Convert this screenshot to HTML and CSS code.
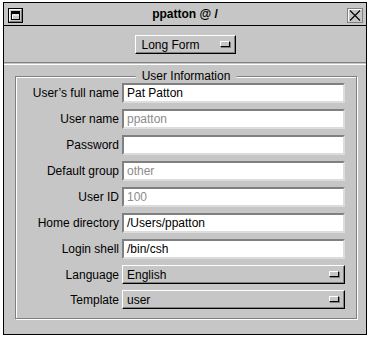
FILE: index.html
```html
<!DOCTYPE html>
<html lang="en">

<head>
    <meta charset="UTF-8">
    <title>ppatton @ /</title>
    <link rel="stylesheet" href="styles.css">
</head>

<body>
    <div class="window">
        <div class="titlebar">
            <span class="title-btn">
                <svg width="15" height="15" viewBox="0 0 15 15">
                    <rect x="0.5" y="0.5" width="14" height="14" fill="#c6c6c6" stroke="#000"/>
                    <path d="M1.5 13.5V1.5H13.5" fill="none" stroke="#fff"/>
                    <path d="M13.5 1.5V13.5H1.5" fill="none" stroke="#808080"/>
                    <rect x="3.5" y="3.5" width="8" height="8" fill="#c6c6c6" stroke="#000"/>
                    <rect x="4" y="4" width="7" height="2" fill="#000"/>
                    <path d="M4.5 11V7H11" fill="none" stroke="#fff"/>
                </svg>
            </span>
            <h1>ppatton @ /</h1>
            <span class="title-btn">
                <svg width="16" height="15" viewBox="0 0 16 15">
                    <rect x="0.5" y="0.5" width="15" height="14" fill="#c6c6c6" stroke="#808080"/>
                    <path d="M1.5 13.5V1.5H14.5" fill="none" stroke="#fff"/>
                    <path d="M3 2.5L13 12.5M13 2.5L3 12.5" stroke="#000" stroke-width="1.1"/>
                </svg>
            </span>
        </div>

        <div class="content">
            <div class="top">
                <div class="popup form-popup">
                    <span>Long Form</span>
                    <i class="knob"></i>
                </div>
            </div>

            <div class="separator"></div>

            <div class="group">
                <span class="legend">User Information</span>

                <div class="rows">
                    <label>User’s full name</label>
                    <div class="field">Pat Patton</div>

                    <label>User name</label>
                    <div class="field disabled">ppatton</div>

                    <label>Password</label>
                    <div class="field"></div>

                    <label>Default group</label>
                    <div class="field disabled">other</div>

                    <label>User ID</label>
                    <div class="field disabled">100</div>

                    <label>Home directory</label>
                    <div class="field">/Users/ppatton</div>

                    <label>Login shell</label>
                    <div class="field">/bin/csh</div>

                    <label>Language</label>
                    <div class="popup">
                        <span>English</span>
                        <i class="knob"></i>
                    </div>

                    <label>Template</label>
                    <div class="popup">
                        <span>user</span>
                        <i class="knob"></i>
                    </div>
                </div>
            </div>
        </div>
    </div>
</body>

</html>
```

FILE: styles.css
```css
:root {
    --gray: #c6c6c6;
    --dark: #808080;
    --light: #fff;
    --black: #000;
    --dim: #8c8c8c;
}

body {
    margin: 0;
    padding: 0;
    background-color: var(--light);
    font-family: "Liberation Sans", Arial, sans-serif;
    font-size: 12px;
    color: var(--black);
}

.window {
    margin: 2px 0 0 3px;
    width: 364px;
    height: 333px;
    box-sizing: border-box;
    border: 1px solid var(--black);
    background-color: var(--gray);
    display: flex;
    flex-direction: column;
}

.titlebar {
    height: 22px;
    border-bottom: 1px solid var(--black);
    display: flex;
    align-items: center;
    justify-content: space-between;
    padding: 0 3px 0 4px;
}

.title-btn {
    display: flex;
    margin-top: 2px;
}

.titlebar h1 {
    margin: 0;
    font-size: 12px;
    font-weight: bold;
}

.content {
    flex: 1;
    display: flex;
    flex-direction: column;
}

.top {
    display: flex;
    justify-content: center;
    padding-top: 9px;
}

.popup {
    height: 19px;
    box-sizing: border-box;
    display: flex;
    align-items: center;
    justify-content: space-between;
    padding: 0 5px 0 4px;
    border-top: 1px solid var(--light);
    border-left: 1px solid var(--light);
    border-right: 1px solid var(--black);
    border-bottom: 1px solid var(--black);
    box-shadow: inset -1px -1px 0 var(--dark);
}

.form-popup {
    width: 101px;
    padding-left: 6px;
}

.knob {
    width: 8px;
    height: 4px;
    background-color: var(--gray);
    border-top: 1px solid var(--light);
    border-left: 1px solid var(--light);
    border-right: 1px solid var(--black);
    border-bottom: 1px solid var(--black);
    box-shadow: 1px 1px 0 var(--dark);
    margin-top: -1px;
}

.separator {
    margin-top: 8px;
    height: 1px;
    border-top: 1px solid var(--dark);
    border-bottom: 1px solid var(--light);
}

.group {
    position: relative;
    margin: 11px 9px 0 11px;
    border: 1px solid var(--dark);
    box-shadow: inset 1px 1px 0 var(--light), 1px 1px 0 var(--light);
    padding: 6px 10px 9px 1px;
}

.legend {
    position: absolute;
    top: -8px;
    left: 50%;
    transform: translateX(-50%);
    padding: 0 6px;
    background-color: var(--gray);
    line-height: 14px;
}

.rows {
    display: grid;
    grid-template-columns: 102px 223px;
    column-gap: 3px;
    row-gap: 6px;
    align-items: center;
}

.rows label {
    text-align: right;
}

.field {
    height: 20px;
    box-sizing: border-box;
    background-color: var(--light);
    border-top: 2px solid var(--dark);
    border-left: 2px solid var(--dark);
    border-right: 2px solid #dcdcdc;
    border-bottom: 2px solid #dcdcdc;
    padding: 0 3px;
    line-height: 16px;
}

.field.disabled {
    color: var(--dim);
}

.rows .popup {
    padding-left: 4px;
}
```
